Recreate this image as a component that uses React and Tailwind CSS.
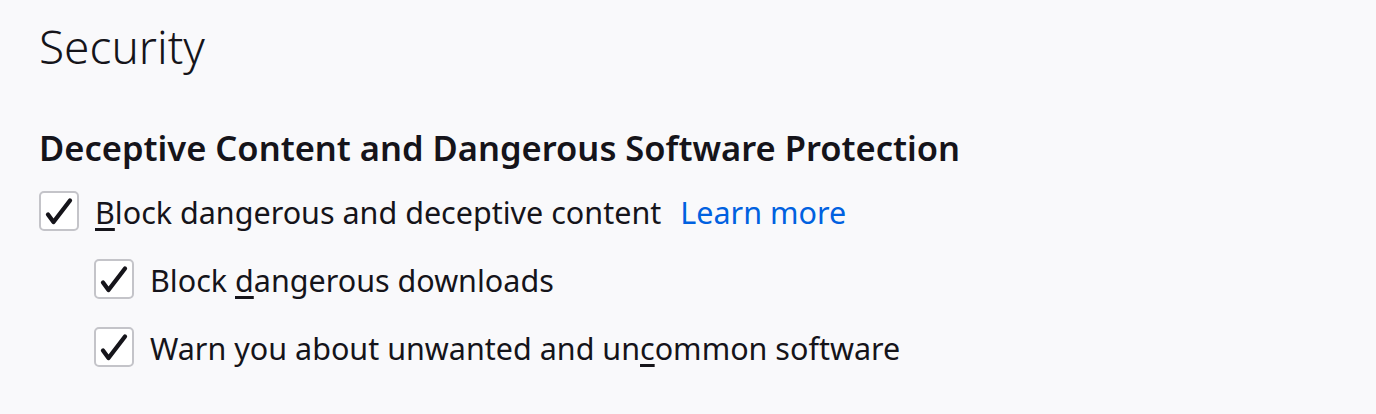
import React from "react";

function Check() {
  return (
    <span className="flex h-[40px] w-[40px] shrink-0 items-center justify-center rounded-[5px] border-2 border-[#c4c4c9] bg-white">
      <svg width="40" height="40" viewBox="0 0 40 40" className="-m-[2px] shrink-0">
        <path d="M9 23.5 L14.5 31 L31 9.5" fill="none" stroke="#15141a" strokeWidth="4.3" strokeLinecap="round" strokeLinejoin="round" />
      </svg>
    </span>
  );
}

function Row({ children, indent }) {
  return (
    <label className={`flex h-[40px] items-center gap-[16px] ${indent ? "ml-[55px]" : ""}`}>
      <Check />
      <span className="pt-[4px] text-[30.5px] leading-none whitespace-nowrap">{children}</span>
    </label>
  );
}

export default function App() {
  return (
    <div
      className="h-[414px] w-full bg-[#f9f9fb] px-[39px] text-[#15141a]"
      style={{ fontFamily: '"Noto Sans", sans-serif' }}
    >
      <h1 className="pt-[23px] text-[46px] font-light leading-none">Security</h1>
      <h2 className="mt-[62px] text-[34.5px] font-semibold leading-none whitespace-nowrap">
        Deceptive Content and Dangerous Software Protection
      </h2>
      <div className="mt-[25px] flex flex-col gap-[28px]">
        <Row>
          <span>
            <u className="underline-offset-4">B</u>lock dangerous and deceptive content
          </span>
          <a className="ml-[19px] text-[#0061e0]">Learn more</a>
        </Row>
        <Row indent>
          Block <u className="underline-offset-4">d</u>angerous downloads
        </Row>
        <Row indent>
          Warn you about unwanted and un<u className="underline-offset-4">c</u>ommon software
        </Row>
      </div>
    </div>
  );
}
